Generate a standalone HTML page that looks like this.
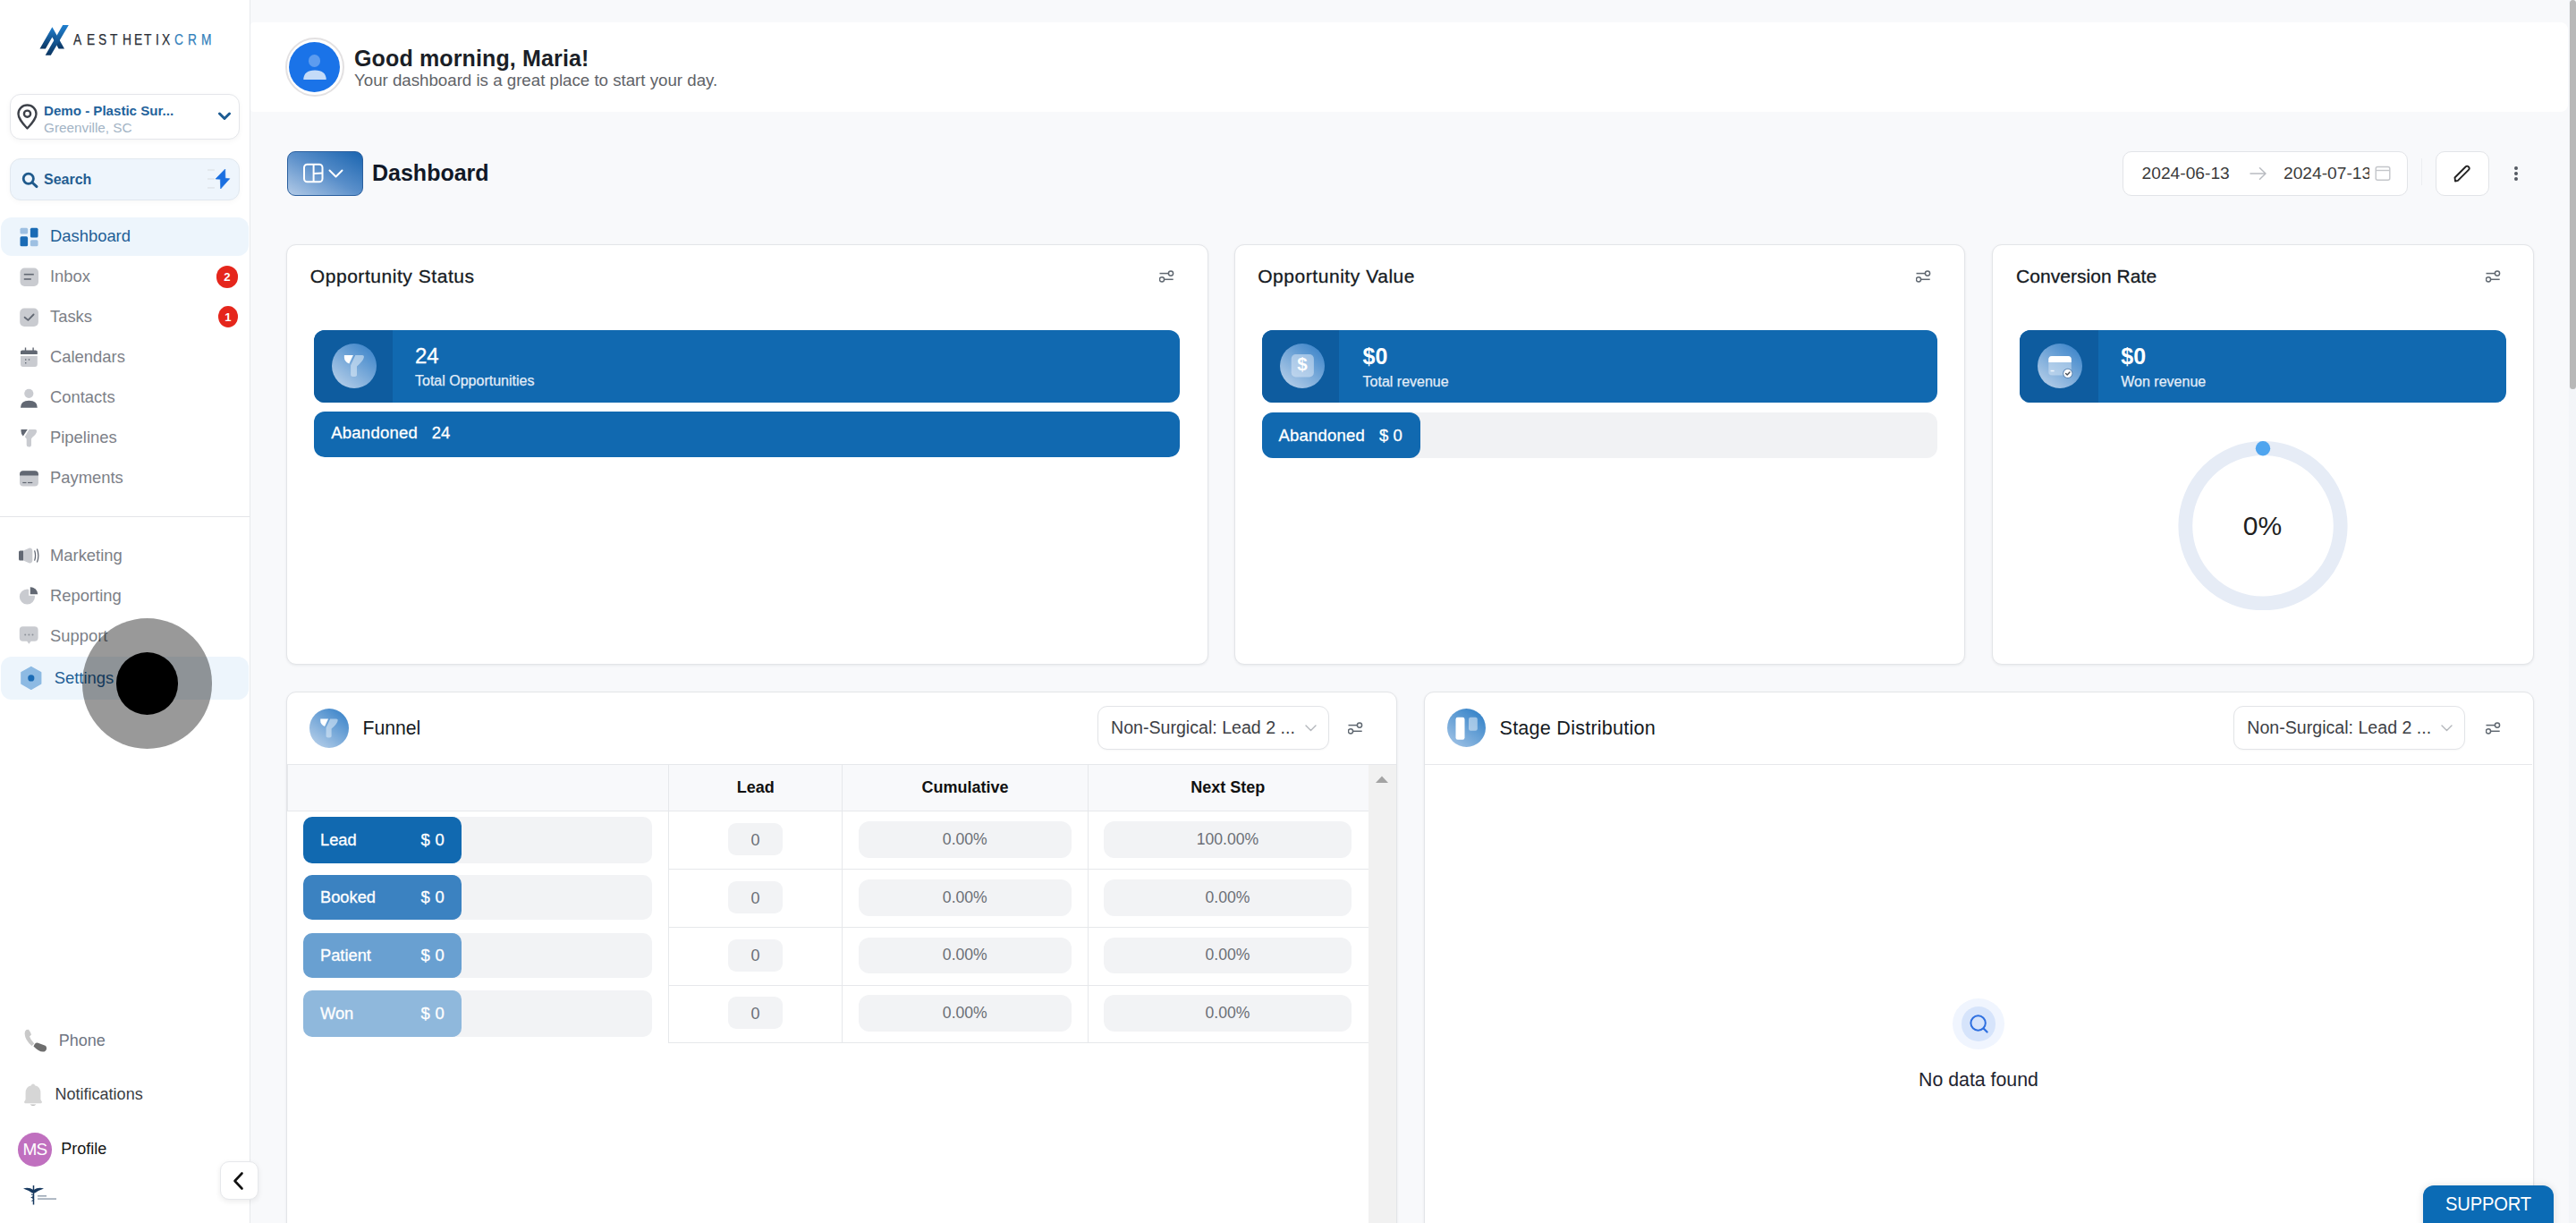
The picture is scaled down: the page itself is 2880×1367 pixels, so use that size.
<!DOCTYPE html>
<html><head><meta charset="utf-8"><title>Dashboard</title><style>*{margin:0;padding:0}
html,body{width:2880px;height:1367px;overflow:hidden;background:#f8f9fb}
body{position:relative;font-family:"Liberation Sans",sans-serif}
.t{position:absolute;white-space:pre;line-height:1}
.r{position:absolute;display:block}
</style></head>
<body>
<div class="r" style="left:280.0px;top:0.0px;width:2600.0px;height:1367.0px;background:#f8f9fb;"></div>
<div class="r" style="left:280.0px;top:24.8px;width:2591.0px;height:100.0px;background:#fff;border-radius:4px 8px 8px 4px;"></div>
<div class="r" style="left:318.5px;top:41.5px;width:66.0px;height:66.0px;background:#fff;border:2px solid #e3e1e2;border-radius:50%;box-sizing:border-box;"></div>
<div class="r" style="left:322.8px;top:46.5px;width:57.6px;height:56.5px;background:#1a73e8;border-radius:50%;"></div>
<div class="r" style="left:345.0px;top:61.2px;width:13.4px;height:13.4px;background:#5d9cef;border-radius:50%;"></div>
<svg class="r" style="left:338.5px;top:78.0px;" width="26" height="11" viewBox="0 0 26 11"><path d="M0.3 10.9 Q0.5 0.4 13 0.4 Q25.5 0.4 25.7 10.9 Z" fill="#c4dbf8"/></svg>
<div class="t " style="left:396.0px;top:52.8px;font-size:25px;color:#1b1f27;font-weight:bold;letter-spacing:0.14px;">Good morning, Maria!</div>
<div class="t " style="left:396.0px;top:81.2px;font-size:18.7px;color:#5f6368;">Your dashboard is a great place to start your day.</div>
<div class="r" style="left:320.5px;top:169.0px;width:85.0px;height:50.0px;background:linear-gradient(30deg,#b3cbe7 0%,#5a8fca 50%,#1a65b0 100%);border:1px solid #2a5f9e;border-radius:9px;box-sizing:border-box;"></div>
<svg class="r" style="left:338.0px;top:182.0px;" width="26" height="23" viewBox="0 0 26 23"><rect x="2" y="1.8" width="20.5" height="19.5" rx="3.5" fill="none" stroke="#fff" stroke-width="2"/><line x1="12.6" y1="1.8" x2="12.6" y2="21.3" stroke="#fff" stroke-width="2"/><line x1="12.6" y1="12" x2="22.5" y2="11.5" stroke="#fff" stroke-width="2"/></svg>
<svg class="r" style="left:366.0px;top:186.5px;" width="20" height="15" viewBox="0 0 20 15"><path d="M2.5 3.5 L9.5 10.5 L16.5 3.5" fill="none" stroke="#fff" stroke-width="2" stroke-linecap="round" stroke-linejoin="round"/></svg>
<div class="t " style="left:416.0px;top:180.6px;font-size:25px;color:#111827;font-weight:bold;">Dashboard</div>
<div class="r" style="left:2372.5px;top:169.0px;width:319.5px;height:50.0px;background:#fff;border:1px solid #e2e4e8;border-radius:10px;box-sizing:border-box;"></div>
<div class="t " style="left:2394.6px;top:183.7px;font-size:19.2px;color:#3a3a3a;">2024-06-13</div>
<svg class="r" style="left:2514.0px;top:186.0px;" width="22" height="16" viewBox="0 0 22 16"><path d="M2 8 L19 8 M12.5 1.8 L19 8 L12.5 14.2" fill="none" stroke="#b9bcc1" stroke-width="1.5" stroke-linecap="round" stroke-linejoin="round"/></svg>
<div class="r" style="left:2553.0px;top:180.0px;width:96.0px;height:30.0px;overflow:hidden;"><div class="t " style="left:0.0px;top:3.7px;font-size:19.2px;color:#3a3a3a;">2024-07-13</div>
</div>
<svg class="r" style="left:2654.0px;top:184.0px;" width="20" height="20" viewBox="0 0 20 20"><rect x="2.2" y="2.5" width="15.6" height="14.8" rx="2" fill="none" stroke="#c4c6ca" stroke-width="1.4"/><line x1="2.2" y1="6.5" x2="17.8" y2="6.5" stroke="#c4c6ca" stroke-width="1.4"/></svg>
<div class="r" style="left:2707.0px;top:177.0px;width:1.0px;height:30.0px;background:#eceef1;"></div>
<div class="r" style="left:2723.0px;top:169.0px;width:59.5px;height:50.0px;background:#fff;border:1px solid #e2e4e8;border-radius:10px;box-sizing:border-box;"></div>
<svg class="r" style="left:2741.0px;top:183.0px;" width="24" height="22" viewBox="0 0 24 22"><path d="M4 19.5 L3.5 15.5 L15.5 3.5 Q17.2 1.8 18.9 3.5 Q20.6 5.2 18.9 6.9 L6.9 18.9 Z" fill="none" stroke="#222" stroke-width="1.9" stroke-linejoin="round"/></svg>
<div class="r" style="left:2811.0px;top:186.2px;width:3.8px;height:3.8px;background:#555a62;border-radius:50%;"></div>
<div class="r" style="left:2811.0px;top:192.2px;width:3.8px;height:3.8px;background:#555a62;border-radius:50%;"></div>
<div class="r" style="left:2811.0px;top:198.2px;width:3.8px;height:3.8px;background:#555a62;border-radius:50%;"></div>
<div class="r" style="left:320.0px;top:273.0px;width:1030.5px;height:470.0px;background:#fff;border:1px solid #e3e5e8;border-radius:11px;box-sizing:border-box;box-shadow:0 1px 3px rgba(16,24,40,0.07);"></div>
<div class="r" style="left:1379.8px;top:273.0px;width:817.2px;height:470.0px;background:#fff;border:1px solid #e3e5e8;border-radius:11px;box-sizing:border-box;box-shadow:0 1px 3px rgba(16,24,40,0.07);"></div>
<div class="r" style="left:2226.5px;top:273.0px;width:606.5px;height:470.0px;background:#fff;border:1px solid #e3e5e8;border-radius:11px;box-sizing:border-box;box-shadow:0 1px 3px rgba(16,24,40,0.07);"></div>
<div class="t " style="left:346.8px;top:298.2px;font-size:21px;color:#151a22;letter-spacing:0.55px;-webkit-text-stroke:0.3px #151a22;">Opportunity Status</div>
<div class="t " style="left:1406.2px;top:298.2px;font-size:21px;color:#151a22;letter-spacing:0.55px;-webkit-text-stroke:0.3px #151a22;">Opportunity Value</div>
<div class="t " style="left:2254.0px;top:298.2px;font-size:21px;color:#151a22;letter-spacing:0.05px;-webkit-text-stroke:0.3px #151a22;">Conversion Rate</div>
<svg class="r" style="left:1295.5px;top:302.0px;" width="18" height="15" viewBox="0 0 18 15"><line x1="0.5" y1="3.6" x2="10" y2="3.6" stroke="#5f6770" stroke-width="1.5"/><circle cx="13" cy="3.6" r="2.6" fill="none" stroke="#5f6770" stroke-width="1.5"/><circle cx="3" cy="10.3" r="2.6" fill="none" stroke="#5f6770" stroke-width="1.5"/><line x1="5.8" y1="10.3" x2="15.7" y2="10.3" stroke="#5f6770" stroke-width="1.5"/></svg>
<svg class="r" style="left:2142.3px;top:302.0px;" width="18" height="15" viewBox="0 0 18 15"><line x1="0.5" y1="3.6" x2="10" y2="3.6" stroke="#5f6770" stroke-width="1.5"/><circle cx="13" cy="3.6" r="2.6" fill="none" stroke="#5f6770" stroke-width="1.5"/><circle cx="3" cy="10.3" r="2.6" fill="none" stroke="#5f6770" stroke-width="1.5"/><line x1="5.8" y1="10.3" x2="15.7" y2="10.3" stroke="#5f6770" stroke-width="1.5"/></svg>
<svg class="r" style="left:2778.5px;top:302.0px;" width="18" height="15" viewBox="0 0 18 15"><line x1="0.5" y1="3.6" x2="10" y2="3.6" stroke="#5f6770" stroke-width="1.5"/><circle cx="13" cy="3.6" r="2.6" fill="none" stroke="#5f6770" stroke-width="1.5"/><circle cx="3" cy="10.3" r="2.6" fill="none" stroke="#5f6770" stroke-width="1.5"/><line x1="5.8" y1="10.3" x2="15.7" y2="10.3" stroke="#5f6770" stroke-width="1.5"/></svg>
<div class="r" style="left:351.0px;top:369.3px;width:968.0px;height:80.4px;background:#1169b0;border-radius:12px;overflow:hidden;"><div class="r" style="left:0.0px;top:0.0px;width:87.6px;height:80.4px;background:#0e5c9f;"></div>
</div>
<svg class="r" style="left:370.8px;top:383.9px;" width="50" height="50" viewBox="0 0 50 50"><defs><linearGradient id="gf1" x1="0.15" y1="0.95" x2="0.85" y2="0.05"><stop offset="0" stop-color="#b3cde8"/><stop offset="1" stop-color="#3d85ca"/></linearGradient></defs>
<circle cx="25" cy="25" r="25" fill="url(#gf1)"/>
<path d="M13.9 13.1 L23.9 13.1 L19.3 22.6 Q13.9 20 13.9 15.5 Z" fill="#fff"/>
<path d="M26.3 13.1 L34 13.1 Q36.4 13.1 35.8 15.8 Q34.8 19.8 28 25.5 L28 35 Q28 37 24.6 37 Q21.1 37 21.1 35 L21.1 24.3 Z" fill="#dbe9f6" fill-opacity="0.6"/></svg>
<div class="t " style="left:464.0px;top:385.7px;font-size:24px;color:#fff;-webkit-text-stroke:0.3px #fff;">24</div>
<div class="t " style="left:464.0px;top:417.5px;font-size:16px;color:#e3edf8;-webkit-text-stroke:0.25px #e3edf8;">Total Opportunities</div>
<div class="r" style="left:351.0px;top:460.0px;width:968.0px;height:51.0px;background:#1169b0;border-radius:12px;"></div>
<div class="t " style="left:370.3px;top:475.3px;font-size:18.5px;color:#fff;letter-spacing:0.22px;-webkit-text-stroke:0.3px #fff;">Abandoned</div>
<div class="t " style="left:482.8px;top:475.3px;font-size:18.5px;color:#fff;-webkit-text-stroke:0.3px #fff;">24</div>
<div class="r" style="left:1411.0px;top:369.3px;width:755.0px;height:81.0px;background:#1169b0;border-radius:12px;overflow:hidden;"><div class="r" style="left:0.0px;top:0.0px;width:86.2px;height:81.0px;background:#0e5c9f;"></div>
</div>
<svg class="r" style="left:1430.7px;top:384.2px;" width="50" height="50" viewBox="0 0 50 50"><defs><linearGradient id="gd1" x1="0.15" y1="0.95" x2="0.85" y2="0.05"><stop offset="0" stop-color="#b3cde8"/><stop offset="1" stop-color="#3d85ca"/></linearGradient></defs><circle cx="25" cy="25" r="25" fill="url(#gd1)"/><rect x="12.7" y="12" width="25.2" height="25.4" rx="5" fill="#dbe8f5" fill-opacity="0.55"/></svg>
<div class="t " style="left:1455.9px;top:397.2px;font-size:20.5px;color:#fff;font-weight:bold;transform:translateX(-50%);">$</div>
<div class="t " style="left:1523.6px;top:386.3px;font-size:25px;color:#fff;font-weight:bold;">$0</div>
<div class="t " style="left:1523.6px;top:418.9px;font-size:16px;color:#e3edf8;-webkit-text-stroke:0.25px #e3edf8;">Total revenue</div>
<div class="r" style="left:1411.0px;top:461.0px;width:755.0px;height:51.0px;background:#f1f2f4;border-radius:12px;"></div>
<div class="r" style="left:1411.0px;top:461.0px;width:176.7px;height:51.0px;background:#1169b0;border-radius:12px;"></div>
<div class="t " style="left:1429.4px;top:477.6px;font-size:18.5px;color:#fff;letter-spacing:0.22px;-webkit-text-stroke:0.3px #fff;">Abandoned</div>
<div class="t " style="left:1542.0px;top:477.6px;font-size:18.5px;color:#fff;-webkit-text-stroke:0.3px #fff;">$ 0</div>
<div class="r" style="left:2258.0px;top:369.2px;width:544.0px;height:81.3px;background:#1169b0;border-radius:12px;overflow:hidden;"><div class="r" style="left:0.0px;top:0.0px;width:87.5px;height:81.3px;background:#0e5c9f;"></div>
</div>
<svg class="r" style="left:2278.0px;top:384.0px;" width="50" height="50" viewBox="0 0 50 50"><defs><linearGradient id="gc1" x1="0.15" y1="0.95" x2="0.85" y2="0.05"><stop offset="0" stop-color="#b3cde8"/><stop offset="1" stop-color="#3d85ca"/></linearGradient></defs><circle cx="25" cy="25" r="25" fill="url(#gc1)"/><rect x="12.3" y="13.9" width="25.5" height="21.7" rx="3.8" fill="#d9e8f6" fill-opacity="0.5"/><path d="M12.3 21.1 L12.3 17.7 Q12.3 13.9 16.1 13.9 L34 13.9 Q37.8 13.9 37.8 17.7 L37.8 21.1 Z" fill="#fff"/><rect x="14.6" y="29.8" width="4" height="1.5" fill="#eef5fb"/><circle cx="33.8" cy="33.4" r="5.6" fill="#5d86b3"/><circle cx="33.8" cy="33.4" r="4.6" fill="#fff"/><path d="M31.6 33.5 L33.2 35 L36 32" fill="none" stroke="#4a4f57" stroke-width="1.4" stroke-linecap="round" stroke-linejoin="round"/></svg>
<div class="t " style="left:2371.3px;top:386.3px;font-size:25px;color:#fff;font-weight:bold;">$0</div>
<div class="t " style="left:2371.3px;top:418.9px;font-size:16px;color:#e3edf8;-webkit-text-stroke:0.25px #e3edf8;">Won revenue</div>
<svg class="r" style="left:2430.0px;top:482.0px;" width="200" height="200" viewBox="0 0 200 200"><circle cx="100" cy="105.7" r="86.7" fill="none" stroke="#e6ecf6" stroke-width="15.8"/><circle cx="100" cy="19.2" r="8.2" fill="#4fa5ef"/></svg>
<div class="t " style="left:2529.5px;top:573.2px;font-size:30px;color:#1f1f1f;transform:translateX(-50%);">0%</div>
<div class="r" style="left:320.0px;top:773.0px;width:1242.0px;height:627.0px;background:#fff;border:1px solid #e3e5e8;border-radius:11px;box-sizing:border-box;box-shadow:0 1px 3px rgba(16,24,40,0.07);"></div>
<div class="r" style="left:1592.0px;top:773.0px;width:1241.0px;height:627.0px;background:#fff;border:1px solid #e3e5e8;border-radius:11px;box-sizing:border-box;box-shadow:0 1px 3px rgba(16,24,40,0.07);"></div>
<svg class="r" style="left:346.0px;top:791.5px;" width="44" height="44" viewBox="0 0 50 50"><defs><linearGradient id="gf2" x1="0.15" y1="0.95" x2="0.85" y2="0.05"><stop offset="0" stop-color="#b3cde8"/><stop offset="1" stop-color="#3d85ca"/></linearGradient></defs>
<circle cx="25" cy="25" r="25" fill="url(#gf2)"/>
<path d="M13.9 13.1 L23.9 13.1 L19.3 22.6 Q13.9 20 13.9 15.5 Z" fill="#fff"/>
<path d="M26.3 13.1 L34 13.1 Q36.4 13.1 35.8 15.8 Q34.8 19.8 28 25.5 L28 35 Q28 37 24.6 37 Q21.1 37 21.1 35 L21.1 24.3 Z" fill="#dbe9f6" fill-opacity="0.6"/></svg>
<div class="t " style="left:405.5px;top:803.0px;font-size:21.2px;color:#151a22;">Funnel</div>
<div class="r" style="left:1226.7px;top:789.0px;width:259.3px;height:49.3px;background:#fff;border:1px solid #e2e4e7;border-radius:11px;box-sizing:border-box;box-shadow:0 1px 2px rgba(0,0,0,0.03);"></div>
<div class="t " style="left:1242.0px;top:803.9px;font-size:19.6px;color:#3d4045;">Non-Surgical: Lead 2 ...</div>
<svg class="r" style="left:1458.0px;top:807.5px;" width="16" height="12" viewBox="0 0 16 12"><path d="M2 3 L7.5 8.5 L13 3" fill="none" stroke="#b3b6bb" stroke-width="1.4" stroke-linecap="round" stroke-linejoin="round"/></svg>
<svg class="r" style="left:1506.5px;top:806.5px;" width="18" height="15" viewBox="0 0 18 15"><line x1="0.5" y1="3.6" x2="10" y2="3.6" stroke="#5f6770" stroke-width="1.5"/><circle cx="13" cy="3.6" r="2.6" fill="none" stroke="#5f6770" stroke-width="1.5"/><circle cx="3" cy="10.3" r="2.6" fill="none" stroke="#5f6770" stroke-width="1.5"/><line x1="5.8" y1="10.3" x2="15.7" y2="10.3" stroke="#5f6770" stroke-width="1.5"/></svg>
<div class="r" style="left:321.0px;top:854.0px;width:1240.0px;height:1.0px;background:#e6e8eb;"></div>
<div class="r" style="left:321.0px;top:855.0px;width:1208.5px;height:51.0px;background:#f8f9fb;"></div>
<div class="r" style="left:321.0px;top:906.0px;width:1208.5px;height:1.0px;background:#e6e8eb;"></div>
<div class="r" style="left:321.0px;top:855.0px;width:1.0px;height:51.0px;background:#e6e8eb;"></div>
<div class="r" style="left:746.5px;top:855.0px;width:1.0px;height:310.5px;background:#e6e8eb;"></div>
<div class="r" style="left:940.5px;top:855.0px;width:1.0px;height:310.5px;background:#e6e8eb;"></div>
<div class="r" style="left:1216.0px;top:855.0px;width:1.0px;height:310.5px;background:#e6e8eb;"></div>
<div class="t " style="left:844.7px;top:871.2px;font-size:18px;color:#111;font-weight:bold;transform:translateX(-50%);">Lead</div>
<div class="t " style="left:1079.0px;top:871.2px;font-size:18px;color:#111;font-weight:bold;transform:translateX(-50%);">Cumulative</div>
<div class="t " style="left:1372.7px;top:871.2px;font-size:18px;color:#111;font-weight:bold;transform:translateX(-50%);">Next Step</div>
<div class="r" style="left:746.5px;top:971.0px;width:783.0px;height:1.0px;background:#e6e8eb;"></div>
<div class="r" style="left:746.5px;top:1035.5px;width:783.0px;height:1.0px;background:#e6e8eb;"></div>
<div class="r" style="left:746.5px;top:1100.5px;width:783.0px;height:1.0px;background:#e6e8eb;"></div>
<div class="r" style="left:746.5px;top:1165.0px;width:783.0px;height:1.0px;background:#e6e8eb;"></div>
<div class="r" style="left:1529.5px;top:855.0px;width:31.5px;height:512.0px;background:#f1f1f1;"></div>
<svg class="r" style="left:1537.0px;top:866.0px;" width="18" height="10" viewBox="0 0 18 10"><path d="M1 9 L8 1.5 L15 9 Z" fill="#a3a3a3"/></svg>
<div class="r" style="left:339.2px;top:913.0px;width:389.8px;height:51.5px;background:#f2f3f5;border-radius:10px;"></div>
<div class="r" style="left:339.2px;top:913.0px;width:176.8px;height:51.5px;background:#1169b0;border-radius:10px;"></div>
<div class="t " style="left:358.0px;top:929.9px;font-size:18.3px;color:#fff;-webkit-text-stroke:0.3px #fff;">Lead</div>
<div class="t " style="left:497.0px;top:930.0px;font-size:18.4px;color:#fff;letter-spacing:0.3px;transform:translateX(-100%);-webkit-text-stroke:0.3px #fff;">$ 0</div>
<div class="r" style="left:339.2px;top:977.5px;width:389.8px;height:50.5px;background:#f2f3f5;border-radius:10px;"></div>
<div class="r" style="left:339.2px;top:977.5px;width:176.8px;height:50.5px;background:#3b82c1;border-radius:10px;"></div>
<div class="t " style="left:358.0px;top:993.9px;font-size:18.3px;color:#fff;-webkit-text-stroke:0.3px #fff;">Booked</div>
<div class="t " style="left:497.0px;top:994.0px;font-size:18.4px;color:#fff;letter-spacing:0.3px;transform:translateX(-100%);-webkit-text-stroke:0.3px #fff;">$ 0</div>
<div class="r" style="left:339.2px;top:1042.8px;width:389.8px;height:50.5px;background:#f2f3f5;border-radius:10px;"></div>
<div class="r" style="left:339.2px;top:1042.8px;width:176.8px;height:50.5px;background:#69a0d1;border-radius:10px;"></div>
<div class="t " style="left:358.0px;top:1059.2px;font-size:18.3px;color:#fff;-webkit-text-stroke:0.3px #fff;">Patient</div>
<div class="t " style="left:497.0px;top:1059.3px;font-size:18.4px;color:#fff;letter-spacing:0.3px;transform:translateX(-100%);-webkit-text-stroke:0.3px #fff;">$ 0</div>
<div class="r" style="left:339.2px;top:1107.0px;width:389.8px;height:51.5px;background:#f2f3f5;border-radius:10px;"></div>
<div class="r" style="left:339.2px;top:1107.0px;width:176.8px;height:51.5px;background:#8fb8dc;border-radius:10px;"></div>
<div class="t " style="left:358.0px;top:1123.9px;font-size:18.3px;color:#fff;-webkit-text-stroke:0.3px #fff;">Won</div>
<div class="t " style="left:497.0px;top:1124.0px;font-size:18.4px;color:#fff;letter-spacing:0.3px;transform:translateX(-100%);-webkit-text-stroke:0.3px #fff;">$ 0</div>
<div class="r" style="left:814.0px;top:920.0px;width:61.0px;height:36.0px;background:#f2f3f5;border-radius:9px;"></div>
<div class="t " style="left:844.5px;top:929.6px;font-size:18px;color:#6b6f76;transform:translateX(-50%);">0</div>
<div class="r" style="left:960.0px;top:918.0px;width:237.5px;height:40.5px;background:#f2f3f5;border-radius:12px;"></div>
<div class="t " style="left:1078.8px;top:929.9px;font-size:17.6px;color:#6b6f76;transform:translateX(-50%);">0.00%</div>
<div class="r" style="left:1234.3px;top:918.0px;width:276.4px;height:40.5px;background:#f2f3f5;border-radius:12px;"></div>
<div class="t " style="left:1372.5px;top:929.9px;font-size:17.6px;color:#6b6f76;transform:translateX(-50%);">100.00%</div>
<div class="r" style="left:814.0px;top:985.0px;width:61.0px;height:36.0px;background:#f2f3f5;border-radius:9px;"></div>
<div class="t " style="left:844.5px;top:994.6px;font-size:18px;color:#6b6f76;transform:translateX(-50%);">0</div>
<div class="r" style="left:960.0px;top:983.0px;width:237.5px;height:40.5px;background:#f2f3f5;border-radius:12px;"></div>
<div class="t " style="left:1078.8px;top:994.9px;font-size:17.6px;color:#6b6f76;transform:translateX(-50%);">0.00%</div>
<div class="r" style="left:1234.3px;top:983.0px;width:276.4px;height:40.5px;background:#f2f3f5;border-radius:12px;"></div>
<div class="t " style="left:1372.5px;top:994.9px;font-size:17.6px;color:#6b6f76;transform:translateX(-50%);">0.00%</div>
<div class="r" style="left:814.0px;top:1049.5px;width:61.0px;height:36.0px;background:#f2f3f5;border-radius:9px;"></div>
<div class="t " style="left:844.5px;top:1059.1px;font-size:18px;color:#6b6f76;transform:translateX(-50%);">0</div>
<div class="r" style="left:960.0px;top:1047.5px;width:237.5px;height:40.5px;background:#f2f3f5;border-radius:12px;"></div>
<div class="t " style="left:1078.8px;top:1059.4px;font-size:17.6px;color:#6b6f76;transform:translateX(-50%);">0.00%</div>
<div class="r" style="left:1234.3px;top:1047.5px;width:276.4px;height:40.5px;background:#f2f3f5;border-radius:12px;"></div>
<div class="t " style="left:1372.5px;top:1059.4px;font-size:17.6px;color:#6b6f76;transform:translateX(-50%);">0.00%</div>
<div class="r" style="left:814.0px;top:1114.0px;width:61.0px;height:36.0px;background:#f2f3f5;border-radius:9px;"></div>
<div class="t " style="left:844.5px;top:1123.6px;font-size:18px;color:#6b6f76;transform:translateX(-50%);">0</div>
<div class="r" style="left:960.0px;top:1112.0px;width:237.5px;height:40.5px;background:#f2f3f5;border-radius:12px;"></div>
<div class="t " style="left:1078.8px;top:1123.9px;font-size:17.6px;color:#6b6f76;transform:translateX(-50%);">0.00%</div>
<div class="r" style="left:1234.3px;top:1112.0px;width:276.4px;height:40.5px;background:#f2f3f5;border-radius:12px;"></div>
<div class="t " style="left:1372.5px;top:1123.9px;font-size:17.6px;color:#6b6f76;transform:translateX(-50%);">0.00%</div>
<svg class="r" style="left:1617.8px;top:792.0px;" width="43" height="43" viewBox="0 0 43 43"><defs><linearGradient id="gs1" x1="0.15" y1="0.95" x2="0.85" y2="0.05"><stop offset="0" stop-color="#9cc0e4"/><stop offset="1" stop-color="#3382c8"/></linearGradient></defs><circle cx="21.5" cy="21.5" r="21.5" fill="url(#gs1)"/><rect x="9.5" y="9.8" width="10" height="25" rx="2.2" fill="#fff"/><rect x="24" y="9.8" width="9.8" height="15" rx="2.2" fill="#d9e7f5" fill-opacity="0.6"/></svg>
<div class="t " style="left:1676.5px;top:802.7px;font-size:21.6px;color:#151a22;letter-spacing:0.23px;">Stage Distribution</div>
<div class="r" style="left:2497.0px;top:789.4px;width:259.0px;height:49.1px;background:#fff;border:1px solid #e2e4e7;border-radius:11px;box-sizing:border-box;box-shadow:0 1px 2px rgba(0,0,0,0.03);"></div>
<div class="t " style="left:2512.3px;top:804.3px;font-size:19.6px;color:#3d4045;">Non-Surgical: Lead 2 ...</div>
<svg class="r" style="left:2728.0px;top:807.9px;" width="16" height="12" viewBox="0 0 16 12"><path d="M2 3 L7.5 8.5 L13 3" fill="none" stroke="#b3b6bb" stroke-width="1.4" stroke-linecap="round" stroke-linejoin="round"/></svg>
<svg class="r" style="left:2778.5px;top:806.5px;" width="18" height="15" viewBox="0 0 18 15"><line x1="0.5" y1="3.6" x2="10" y2="3.6" stroke="#5f6770" stroke-width="1.5"/><circle cx="13" cy="3.6" r="2.6" fill="none" stroke="#5f6770" stroke-width="1.5"/><circle cx="3" cy="10.3" r="2.6" fill="none" stroke="#5f6770" stroke-width="1.5"/><line x1="5.8" y1="10.3" x2="15.7" y2="10.3" stroke="#5f6770" stroke-width="1.5"/></svg>
<div class="r" style="left:1593.0px;top:854.0px;width:1238.0px;height:1.0px;background:#e6e8eb;"></div>
<div class="r" style="left:2183.0px;top:1116.0px;width:58.0px;height:57.0px;background:#f0f5fe;border-radius:50%;"></div>
<div class="r" style="left:2192.7px;top:1125.0px;width:38.6px;height:38.5px;background:#d6e4fb;border-radius:50%;"></div>
<svg class="r" style="left:2198.0px;top:1130.0px;" width="30" height="30" viewBox="0 0 30 30"><circle cx="13.6" cy="13.5" r="8.2" fill="none" stroke="#2d6fe0" stroke-width="2"/><line x1="19.6" y1="19.5" x2="23.6" y2="23.5" stroke="#2d6fe0" stroke-width="2.2" stroke-linecap="round"/></svg>
<div class="t " style="left:2212.0px;top:1197.0px;font-size:21.3px;color:#1f2430;transform:translateX(-50%);">No data found</div>
<div class="r" style="left:2872.0px;top:0.0px;width:8.0px;height:1367.0px;background:#f3f5f8;"></div>
<div class="r" style="left:2873.0px;top:0.0px;width:7.0px;height:434.5px;background:#b8b8b8;border-radius:3.5px;"></div>
<div class="r" style="left:2709.0px;top:1325.3px;width:146.0px;height:54.7px;background:#0b6bb5;border-radius:12px;box-shadow:0 0 8px rgba(0,0,0,0.12);"></div>
<div class="t " style="left:2782.0px;top:1334.5px;font-size:22.4px;color:#fff;letter-spacing:-0.2px;transform:translateX(-50%);transform:translateX(-50%) scaleX(0.9);">SUPPORT</div>
<div class="r" style="left:0.0px;top:0.0px;width:279.0px;height:1367.0px;background:#fff;"></div>
<div class="r" style="left:279.0px;top:0.0px;width:1.0px;height:1367.0px;background:#e7e9ec;"></div>
<svg class="r" style="left:40.0px;top:24.0px;" width="40" height="42" viewBox="0 0 40 42"><defs><linearGradient id="lg1" x1="0" y1="0" x2="0" y2="1"><stop offset="0" stop-color="#1f7fcf"/><stop offset="1" stop-color="#0b3561"/></linearGradient></defs>
<polygon points="4.5,30.6 18.4,6.2 32,30.6 25.6,30.6 18.4,17.6 10.9,30.6" fill="url(#lg1)"/>
<polygon points="10.7,37.8 16.8,37.8 36.8,4.1 30.2,4.1" fill="url(#lg1)"/></svg>
<div class="t " style="left:82.4px;top:35.7px;font-size:17.2px;color:#2a2e36;transform-origin:0 0;transform:scaleX(0.8);-webkit-text-stroke:0.25px #2a2e36;">A</div>
<div class="t " style="left:97.3px;top:35.7px;font-size:17.2px;color:#2a2e36;transform-origin:0 0;transform:scaleX(0.8);-webkit-text-stroke:0.25px #2a2e36;">E</div>
<div class="t " style="left:110.4px;top:35.7px;font-size:17.2px;color:#2a2e36;transform-origin:0 0;transform:scaleX(0.8);-webkit-text-stroke:0.25px #2a2e36;">S</div>
<div class="t " style="left:123.4px;top:35.7px;font-size:17.2px;color:#2a2e36;transform-origin:0 0;transform:scaleX(0.8);-webkit-text-stroke:0.25px #2a2e36;">T</div>
<div class="t " style="left:137.4px;top:35.7px;font-size:17.2px;color:#2a2e36;transform-origin:0 0;transform:scaleX(0.8);-webkit-text-stroke:0.25px #2a2e36;">H</div>
<div class="t " style="left:150.4px;top:35.7px;font-size:17.2px;color:#2a2e36;transform-origin:0 0;transform:scaleX(0.8);-webkit-text-stroke:0.25px #2a2e36;">E</div>
<div class="t " style="left:161.4px;top:35.7px;font-size:17.2px;color:#2a2e36;transform-origin:0 0;transform:scaleX(0.8);-webkit-text-stroke:0.25px #2a2e36;">T</div>
<div class="t " style="left:174.4px;top:35.7px;font-size:17.2px;color:#2a2e36;transform-origin:0 0;transform:scaleX(0.8);-webkit-text-stroke:0.25px #2a2e36;">I</div>
<div class="t " style="left:181.0px;top:35.7px;font-size:17.2px;color:#2a2e36;transform-origin:0 0;transform:scaleX(0.8);-webkit-text-stroke:0.25px #2a2e36;">X</div>
<div class="t " style="left:195.1px;top:35.7px;font-size:17.2px;color:#3280bb;transform-origin:0 0;transform:scaleX(0.8);-webkit-text-stroke:0.25px #3280bb;">C</div>
<div class="t " style="left:210.4px;top:35.7px;font-size:17.2px;color:#3280bb;transform-origin:0 0;transform:scaleX(0.8);-webkit-text-stroke:0.25px #3280bb;">R</div>
<div class="t " style="left:224.9px;top:35.7px;font-size:17.2px;color:#3280bb;transform-origin:0 0;transform:scaleX(0.8);-webkit-text-stroke:0.25px #3280bb;">M</div>
<div class="r" style="left:11.0px;top:105.0px;width:257.0px;height:51.0px;background:#fff;border:1px solid #e4e6ea;border-radius:12px;box-sizing:border-box;box-shadow:0 2px 6px rgba(0,0,0,0.04);"></div>
<svg class="r" style="left:18.0px;top:115.0px;" width="26" height="32" viewBox="0 0 26 32"><path d="M12.5 2.5 C6.8 2.5 2.5 6.8 2.5 12.3 C2.5 18.5 12.5 28.5 12.5 28.5 C12.5 28.5 22.5 18.5 22.5 12.3 C22.5 6.8 18.2 2.5 12.5 2.5 Z" fill="none" stroke="#3d4149" stroke-width="2.4" stroke-linejoin="round"/><circle cx="12.5" cy="12.2" r="3.6" fill="none" stroke="#3d4149" stroke-width="2.4"/></svg>
<div class="t " style="left:49.0px;top:116.2px;font-size:15.1px;color:#23629b;font-weight:bold;">Demo - Plastic Sur...</div>
<div class="t " style="left:49.0px;top:134.5px;font-size:15.3px;color:#a3b4c5;">Greenville, SC</div>
<svg class="r" style="left:243.0px;top:124.0px;" width="16" height="12" viewBox="0 0 16 12"><path d="M2.5 3 L8 8.5 L13.5 3" fill="none" stroke="#1d5c93" stroke-width="3" stroke-linecap="round" stroke-linejoin="round"/></svg>
<div class="r" style="left:11.0px;top:177.0px;width:257.0px;height:47.0px;background:#eef5fc;border:1px solid #e1e8ef;border-radius:12px;box-sizing:border-box;box-shadow:0 2px 6px rgba(0,0,0,0.03);"></div>
<svg class="r" style="left:24.0px;top:192.0px;" width="20" height="19" viewBox="0 0 20 19"><circle cx="7.8" cy="7.8" r="5.6" fill="none" stroke="#1f5a8c" stroke-width="2.8"/><line x1="12" y1="12" x2="17" y2="16.6" stroke="#1f5a8c" stroke-width="3" stroke-linecap="round"/></svg>
<div class="t " style="left:49.0px;top:193.0px;font-size:16px;color:#245d91;font-weight:bold;">Search</div>
<svg class="r" style="left:230.0px;top:187.0px;" width="30" height="26" viewBox="0 0 30 26"><line x1="2" y1="3" x2="9.9" y2="3" stroke="#dfe4ea" stroke-width="1.5"/><line x1="2" y1="13" x2="9.9" y2="13" stroke="#dfe4ea" stroke-width="1.5"/><line x1="2" y1="22.9" x2="9.9" y2="22.9" stroke="#dfe4ea" stroke-width="1.5"/><path d="M21.7 2 L11 13 L16.3 13.3 L16.7 24 L26.8 12.7 L21.9 12.3 Z" fill="#1a6fe0" stroke="#1a6fe0" stroke-width="0.6" stroke-linejoin="round"/></svg>
<div class="r" style="left:0.5px;top:242.5px;width:277.5px;height:43.5px;background:#edf5fc;border-radius:12px;"></div>
<svg class="r" style="left:22.0px;top:254.0px;" width="21" height="22" viewBox="0 0 21 22"><rect x="0.5" y="0.7" width="8.6" height="6.8" rx="1.6" fill="#9ec0e2"/><rect x="11.9" y="0.7" width="8.6" height="10.8" rx="1.6" fill="#1a6bb5"/><rect x="0.5" y="10.3" width="8.6" height="11" rx="1.6" fill="#1a6bb5"/><rect x="11.9" y="14.3" width="8.6" height="7" rx="1.6" fill="#9ec0e2"/></svg>
<div class="t " style="left:56.0px;top:255.3px;font-size:18.4px;color:#1f5f96;">Dashboard</div>
<div class="t " style="left:56.0px;top:300.3px;font-size:18.4px;color:#7c8087;">Inbox</div>
<div class="t " style="left:56.0px;top:345.3px;font-size:18.4px;color:#7c8087;">Tasks</div>
<div class="t " style="left:56.0px;top:390.3px;font-size:18.4px;color:#7c8087;">Calendars</div>
<div class="t " style="left:56.0px;top:435.3px;font-size:18.4px;color:#7c8087;">Contacts</div>
<div class="t " style="left:56.0px;top:480.3px;font-size:18.4px;color:#7c8087;">Pipelines</div>
<div class="t " style="left:56.0px;top:525.3px;font-size:18.4px;color:#7c8087;">Payments</div>
<div class="r" style="left:241.8px;top:297.3px;width:24.4px;height:24.3px;background:#e5261c;border-radius:50%;"></div>
<div class="t " style="left:254.0px;top:303.0px;font-size:13.2px;color:#fff;font-weight:bold;transform:translateX(-50%);">2</div>
<div class="r" style="left:243.9px;top:342.2px;width:22.5px;height:24.3px;background:#e5261c;border-radius:50%;"></div>
<div class="t " style="left:255.0px;top:347.8px;font-size:13.2px;color:#fff;font-weight:bold;transform:translateX(-50%);">1</div>
<svg class="r" style="left:22.0px;top:299.0px;" width="22" height="22" viewBox="0 0 22 22"><rect x="0.5" y="0.6" width="20.5" height="20.3" rx="5" fill="#c9cbd0"/><line x1="4.8" y1="7.7" x2="15.8" y2="7.7" stroke="#626873" stroke-width="1.6"/><line x1="4.8" y1="13" x2="12.8" y2="13" stroke="#626873" stroke-width="1.6"/></svg>
<svg class="r" style="left:22.0px;top:344.0px;" width="22" height="22" viewBox="0 0 22 22"><rect x="0.2" y="0.6" width="20.7" height="20.4" rx="5" fill="#c9cbd0"/><path d="M5.6 10.7 L9.4 13.9 L15.6 7.5" fill="none" stroke="#626873" stroke-width="1.8" stroke-linecap="round" stroke-linejoin="round"/></svg>
<svg class="r" style="left:22.0px;top:387.0px;" width="22" height="25" viewBox="0 0 22 25"><path d="M1 9 L1 6 Q1 4.4 3 4.4 L17.8 4.4 Q19.8 4.4 19.8 6 L19.8 9 Z" fill="#626873"/><rect x="5.8" y="1.5" width="1.4" height="4" fill="#626873"/><rect x="14.4" y="1.5" width="1.4" height="4" fill="#626873"/><path d="M1 11 L19.8 11 L19.8 20 Q19.8 23 17 23 L3.8 23 Q1 23 1 20 Z" fill="#c9cbd0"/><rect x="6" y="14.3" width="1.4" height="1.4" fill="#626873"/><rect x="9.8" y="14.3" width="1.4" height="1.4" fill="#626873"/><rect x="6" y="18" width="1.4" height="1.4" fill="#626873"/></svg>
<svg class="r" style="left:22.0px;top:433.0px;" width="22" height="24" viewBox="0 0 22 24"><circle cx="10.3" cy="6.8" r="5.1" fill="#c9cbd0"/><path d="M1 22.7 Q1 14.8 10.4 14.8 Q19.8 14.8 19.8 22.7 Z" fill="#626873"/></svg>
<svg class="r" style="left:22.0px;top:478.0px;" width="22" height="23" viewBox="0 0 22 23"><path d="M1.5 2 L8.8 2 L3.8 9.6 Q1.5 7.6 1.5 4 Z" fill="#626873"/><path d="M10.5 2 L17.3 2 Q19.1 2 19.1 3.8 Q19.1 7 14 11 L13 12.5 L13 19.2 Q13 21.5 10.2 21.5 Q7.7 21.5 7.7 19.2 L7.7 12.5 L5.8 10.2 Z" fill="#c9cbd0"/></svg>
<svg class="r" style="left:22.0px;top:525.0px;" width="22" height="20" viewBox="0 0 22 20"><rect x="0" y="1.3" width="20.9" height="17.2" rx="4" fill="#c9cbd0"/><path d="M0 6.4 L0 5.3 Q0 1.3 4 1.3 L16.9 1.3 Q20.9 1.3 20.9 5.3 L20.9 6.4 Z" fill="#626873"/><line x1="3.3" y1="14.5" x2="7.5" y2="14.5" stroke="#626873" stroke-width="1.2"/><line x1="9" y1="14.5" x2="14.3" y2="14.5" stroke="#626873" stroke-width="1.2"/></svg>
<div class="r" style="left:0.0px;top:576.8px;width:279.0px;height:1.0px;background:#e3e5e8;"></div>
<div class="t " style="left:56.0px;top:611.7px;font-size:18.4px;color:#7c8087;">Marketing</div>
<div class="t " style="left:56.0px;top:656.7px;font-size:18.4px;color:#7c8087;">Reporting</div>
<div class="t " style="left:56.0px;top:701.7px;font-size:18.4px;color:#7c8087;">Support</div>
<svg class="r" style="left:20.0px;top:611.0px;" width="25" height="20" viewBox="0 0 25 20"><path d="M1 6 Q1 4.4 2.6 4.4 L6 4.4 L6 15.5 L2.6 15.5 Q1 15.5 1 14 Z" fill="#626873"/><path d="M6 4.4 L13 1.5 Q16.3 1.3 16.3 5 L16.3 15 Q16.3 18.6 13 18.4 L6 15.5 Z" fill="#c9cbd0"/><path d="M18.6 4.4 Q20.6 10 18.6 15.6" fill="none" stroke="#626873" stroke-width="1.3"/><path d="M21.4 2.4 Q24.4 10 21.4 17.6" fill="none" stroke="#626873" stroke-width="1.3"/></svg>
<svg class="r" style="left:20.0px;top:654.0px;" width="25" height="24" viewBox="0 0 25 24"><circle cx="10.4" cy="13" r="8.6" fill="#c9cbd0"/><path d="M13 1.2 Q22.8 1.6 23.2 11 L13 11 Z" fill="#626873" stroke="#fff" stroke-width="1.6"/></svg>
<svg class="r" style="left:21.0px;top:699.0px;" width="23" height="23" viewBox="0 0 23 23"><path d="M4.5 1.2 L17.5 1.2 Q21.6 1.2 21.6 5.3 L21.6 13.8 Q21.6 17.8 17.5 17.8 L13.6 17.8 L11.4 20.8 L9.2 17.8 L4.5 17.8 Q0.8 17.8 0.8 13.8 L0.8 5.3 Q0.8 1.2 4.5 1.2 Z" fill="#c9cbd0"/><circle cx="7.2" cy="10.6" r="1" fill="#8e939b"/><circle cx="11.4" cy="10.6" r="1" fill="#8e939b"/><circle cx="15.5" cy="10.6" r="1" fill="#8e939b"/></svg>
<div class="r" style="left:0.5px;top:733.7px;width:277.5px;height:48.8px;background:#edf5fc;border-radius:12px;"></div>
<svg class="r" style="left:22.0px;top:744.0px;" width="26" height="27" viewBox="0 0 26 27"><path d="M12.8 1.6 L23.6 7.8 L23.6 20 L12.8 26.2 L2 20 L2 7.8 Z" fill="#8dbae3" stroke="#8dbae3" stroke-width="1.6" stroke-linejoin="round"/><circle cx="12.8" cy="13.9" r="3.6" fill="#1a6bb5"/></svg>
<div class="t " style="left:60.7px;top:748.9px;font-size:18.4px;color:#1f5f96;">Settings</div>
<svg class="r" style="left:26.0px;top:1149.0px;" width="28" height="28" viewBox="0 0 28 28"><path d="M3.5 2 Q1.5 3 1.6 6.5 Q2 13.5 9.5 20 L12.3 17.5 Q8.3 13.5 7 9.6 L9 7.5 Q8 4.5 6 1.8 Z" fill="#c9c9c9"/><path d="M12.8 18 Q14.5 16.2 16.5 16.7 L24 19.6 Q26.4 20.6 26 23.5 Q25.4 26.6 22 26.6 Q17.5 26.8 11.5 20.5 Z" fill="#6e6e6e"/></svg>
<div class="t " style="left:65.7px;top:1153.6px;font-size:18px;color:#6f7683;">Phone</div>
<svg class="r" style="left:26.0px;top:1210.0px;" width="22" height="28" viewBox="0 0 22 28"><path d="M11 1.5 Q13 1.5 13 3.2 Q19.4 4.8 19.4 11.5 L19.4 19 L21 21.8 Q21 23.2 19.6 23.2 L2.4 23.2 Q1 23.2 1 21.8 L2.6 19 L2.6 11.5 Q2.6 4.8 9 3.2 Q9 1.5 11 1.5 Z" fill="#d6d6d6"/><path d="M7.6 24.4 Q11 27.4 14.4 24.4 Z" fill="#bdbdbd"/></svg>
<div class="t " style="left:61.6px;top:1214.4px;font-size:18px;color:#3a3d42;">Notifications</div>
<div class="r" style="left:20.0px;top:1266.0px;width:38.0px;height:37.5px;background:#c070bf;border-radius:50%;"></div>
<div class="t " style="left:39.0px;top:1275.4px;font-size:19px;color:#fff;letter-spacing:-0.8px;transform:translateX(-50%);">MS</div>
<div class="t " style="left:68.3px;top:1275.4px;font-size:18px;color:#151515;">Profile</div>
<svg class="r" style="left:24.0px;top:1324.0px;" width="42" height="24" viewBox="0 0 42 24"><path d="M2 4.5 Q8 2.5 13.5 6 Q19 2.5 25 4.5 Q19 6.5 15 9.5 L13.5 9.5 L12 9.5 Q8 6.5 2 4.5 Z" fill="#17395f"/><line x1="13.5" y1="1" x2="13.5" y2="22.5" stroke="#17395f" stroke-width="1.5"/><path d="M11 11 Q16 12.5 11.5 14.5 Q16 16.5 11.5 18.5" fill="none" stroke="#17395f" stroke-width="1.1"/><rect x="18" y="12.2" width="10" height="1.3" fill="#8795a6"/><rect x="18" y="15.4" width="21" height="1.3" fill="#8795a6"/></svg>
<div class="r" style="left:245.5px;top:1298.0px;width:43.0px;height:43.0px;background:#fff;border:1px solid #e6e8eb;border-radius:10px;box-sizing:border-box;box-shadow:0 2px 6px rgba(0,0,0,0.08);"></div>
<svg class="r" style="left:258.0px;top:1309.0px;" width="18" height="22" viewBox="0 0 18 22"><path d="M12.5 2.5 L4.5 11 L12.5 19.5" fill="none" stroke="#111" stroke-width="2.6" stroke-linecap="round" stroke-linejoin="round"/></svg>
<div class="r" style="left:91.7px;top:691.3px;width:145.4px;height:145.4px;background:rgba(0,0,0,0.4);border-radius:50%;"></div>
<div class="r" style="left:129.7px;top:729.3px;width:69.4px;height:69.4px;background:#000;border-radius:50%;"></div>

</body></html>
